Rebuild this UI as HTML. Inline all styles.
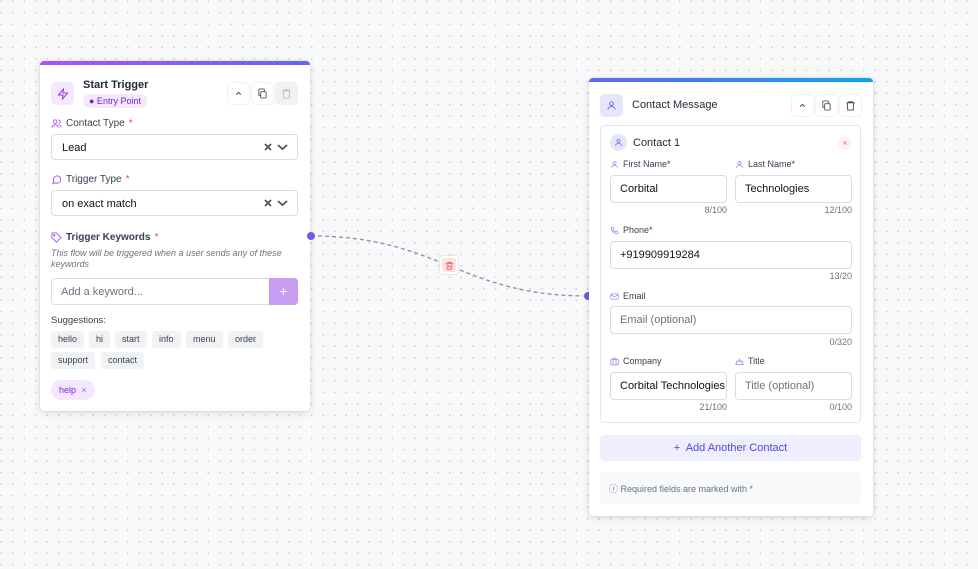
<!DOCTYPE html>
<html><head><meta charset="utf-8"><style>
*{box-sizing:border-box;margin:0;padding:0}
body{width:978px;height:569px;overflow:hidden;font-family:"Liberation Sans",sans-serif;background-color:#f8f9fb;background-image:radial-gradient(circle,#cfd0da 0.8px,transparent 1.1px);background-size:11.5px 11.5px;background-position:-4.5px -4.5px;position:relative;color:#1f2937}
.card{position:absolute;background:#fff;border-radius:4px;box-shadow:0 2px 8px rgba(0,0,0,.12),0 0 0 1px rgba(0,0,0,.04);overflow:hidden}
.bar{position:absolute;left:0;right:0;top:0;height:4px}
.a{position:absolute}
.lbl{position:absolute;font-size:10px;color:#374151;display:flex;align-items:center;gap:4px}
.req{color:#ef4444}
.sel{position:absolute;left:11px;width:247px;height:26px;border:1px solid #d9dce1;border-radius:4px;font-size:11px;padding:7px 10px;color:#111}
.chip{position:absolute;height:17px;background:#f1f2f4;border-radius:3px;font-size:9px;line-height:17px;padding:0 7px;color:#374151}
.btn{position:absolute;width:21px;height:21px;border-radius:4px;box-shadow:0 0 0 1px #eef0f3;display:flex;align-items:center;justify-content:center}
.inp{position:absolute;height:28px;border:1px solid #d9dce1;border-radius:4px;font-size:11px;padding:7px 9px;color:#111}
.ph{color:#6b7280}
.cnt{position:absolute;font-size:9px;color:#6b7280;text-align:right}
svg{display:block}
.si{position:absolute;right:7px;top:7px}
</style></head><body>
<svg class="a" style="left:0;top:0" width="978" height="569">
<path d="M311 236 C 440 236, 460 296, 588 296" fill="none" stroke="#8a8f99" stroke-width="1.3" stroke-dasharray="4 3"/>
</svg>

<div class="card" style="left:40px;top:61px;width:270px;height:350px">
<div class="bar" style="background:linear-gradient(90deg,#a855f7,#6366f1)"></div>
<div class="a" style="left:11px;top:21px;width:23px;height:23px;border-radius:5px;background:#f3e8ff;display:flex;align-items:center;justify-content:center"><svg width="12" height="12" viewBox="0 0 24 24" fill="none" stroke="#9333ea" stroke-width="2"><path d="M13 2L3 14h9l-1 8 10-12h-9l1-8z"/></svg></div>
<div class="a" style="left:43px;top:18px;font-size:11px;font-weight:bold;color:#1f2937">Start Trigger</div>
<div class="a" style="left:43px;top:33px;height:14px;padding:0 6px;background:#f3e8ff;border-radius:7px;font-size:9px;line-height:14px;color:#7e22ce">● Entry Point</div>
<div class="btn" style="left:188px;top:22px"><svg width="9" height="9" viewBox="0 0 24 24" fill="none" stroke="#444" stroke-width="2.5"><path d="M6 15l6-6 6 6"/></svg></div>
<div class="btn" style="left:212px;top:22px"><svg width="11" height="11" viewBox="0 0 24 24" fill="none" stroke="#555" stroke-width="2"><rect x="8" y="8" width="12" height="14" rx="2"/><path d="M16 8V4a2 2 0 0 0-2-2H6a2 2 0 0 0-2 2v12h4"/></svg></div>
<div class="btn" style="left:236px;top:22px;background:#f1f2f4"><svg width="11" height="11" viewBox="0 0 24 24" fill="none" stroke="#bbb" stroke-width="2"><path d="M3 6h18M8 6V4h8v2M5 6l1 16h12l1-16"/></svg></div>
<div class="lbl" style="left:11px;top:57px"><svg width="11" height="11" viewBox="0 0 24 24" fill="none" stroke="#a855f7" stroke-width="2"><circle cx="9" cy="8" r="4"/><path d="M2 21c0-4 3-6 7-6s7 2 7 6M16 4a4 4 0 0 1 0 8M22 21c0-3-2-5-4-6"/></svg>Contact Type <span class="req">*</span></div>
<div class="sel" style="top:73px">Lead<svg class="si" width="26" height="10" viewBox="0 0 26 10" fill="none" stroke="#555" stroke-width="1.8"><path d="M1 2l6 6M7 2l-6 6M14 3l4.5 4 4.5-4"/></svg></div>
<div class="lbl" style="left:11px;top:113px"><svg width="11" height="11" viewBox="0 0 24 24" fill="none" stroke="#a855f7" stroke-width="2"><path d="M21 12a8 8 0 0 1-12 7l-5 2 2-5A8 8 0 1 1 21 12z"/></svg>Trigger Type <span class="req">*</span></div>
<div class="sel" style="top:129px">on exact match<svg class="si" width="26" height="10" viewBox="0 0 26 10" fill="none" stroke="#555" stroke-width="1.8"><path d="M1 2l6 6M7 2l-6 6M14 3l4.5 4 4.5-4"/></svg></div>
<div class="lbl" style="left:11px;top:171px"><svg width="11" height="11" viewBox="0 0 24 24" fill="none" stroke="#a855f7" stroke-width="2"><path d="M2 2h10l10 10-10 10L2 12z"/><circle cx="7" cy="7" r="1.5"/></svg><b>Trigger Keywords</b> <span class="req">*</span></div>
<div class="a" style="left:11px;top:187px;font-size:9px;font-style:italic;color:#6b7280;line-height:11px;width:250px">This flow will be triggered when a user sends any of these keywords</div>
<div class="a" style="left:11px;top:217px;width:247px;height:27px;border:1px solid #d9dce1;border-radius:4px;font-size:11px;padding:7px 9px;color:#6b7280">Add a keyword...</div>
<div class="a" style="left:229px;top:217px;width:29px;height:27px;background:#c89cf0;border-radius:0 4px 4px 0;color:#fff;text-align:center;font-size:14px;line-height:26px">+</div>
<div class="a" style="left:11px;top:254px;font-size:9.5px;color:#374151">Suggestions:</div>
<div class="chip" style="left:11px;top:270px">hello</div>
<div class="chip" style="left:49px;top:270px">hi</div>
<div class="chip" style="left:75px;top:270px">start</div>
<div class="chip" style="left:112px;top:270px">info</div>
<div class="chip" style="left:146px;top:270px">menu</div>
<div class="chip" style="left:188px;top:270px">order</div>
<div class="chip" style="left:11px;top:291px">support</div>
<div class="chip" style="left:61px;top:291px">contact</div>
<div class="a" style="left:11px;top:319px;height:20px;padding:0 8px;background:#f3e8ff;border-radius:10px;font-size:9px;line-height:20px;color:#7e22ce">help <span style="color:#a855f7;margin-left:3px">×</span></div>
</div>

<div class="a" style="left:306px;top:231px;width:10px;height:10px;border-radius:50%;background:#6d5ce7;border:1px solid #fff"></div>
<div class="a" style="left:583px;top:291px;width:10px;height:10px;border-radius:50%;background:#6d5ce7;border:1px solid #fff"></div>
<div class="a" style="left:440px;top:256px;width:18px;height:18px;border-radius:3px;background:#fff;box-shadow:0 0 0 1px #e5e7eb;display:flex;align-items:center;justify-content:center"><div style="width:14px;height:14px;background:#fde2e2;border-radius:2px;display:flex;align-items:center;justify-content:center"><svg width="9" height="9" viewBox="0 0 24 24" fill="none" stroke="#ef4444" stroke-width="2"><path d="M3 6h18M8 6V4h8v2M5 6l1 16h12l1-16M10 11v7M14 11v7"/></svg></div></div>

<div class="card" style="left:589px;top:78px;width:284px;height:438px">
<div class="bar" style="background:linear-gradient(90deg,#6366f1,#0ea5e9)"></div>
<div class="a" style="left:11px;top:16px;width:23px;height:23px;border-radius:5px;background:#e6e6fb;display:flex;align-items:center;justify-content:center"><svg width="11" height="11" viewBox="0 0 24 24" fill="none" stroke="#6366f1" stroke-width="2"><circle cx="12" cy="8" r="4"/><path d="M4 21c0-4 4-7 8-7s8 3 8 7"/></svg></div>
<div class="a" style="left:43px;top:21px;font-size:11px;color:#1f2937">Contact Message</div>
<div class="btn" style="left:203px;top:17px"><svg width="9" height="9" viewBox="0 0 24 24" fill="none" stroke="#444" stroke-width="2.5"><path d="M6 15l6-6 6 6"/></svg></div>
<div class="btn" style="left:227px;top:17px"><svg width="11" height="11" viewBox="0 0 24 24" fill="none" stroke="#555" stroke-width="2"><rect x="8" y="8" width="12" height="14" rx="2"/><path d="M16 8V4a2 2 0 0 0-2-2H6a2 2 0 0 0-2 2v12h4"/></svg></div>
<div class="btn" style="left:251px;top:17px"><svg width="11" height="11" viewBox="0 0 24 24" fill="none" stroke="#444" stroke-width="2"><path d="M3 6h18M8 6V4h8v2M5 6l1 16h12l1-16"/></svg></div>
<div class="a" style="left:11px;top:47px;width:261px;height:298px;border:1px solid #e5e7eb;border-radius:4px"></div>
<div class="a" style="left:21px;top:56px;width:17px;height:17px;border-radius:50%;background:#e6e6fb;display:flex;align-items:center;justify-content:center"><svg width="9" height="9" viewBox="0 0 24 24" fill="none" stroke="#6366f1" stroke-width="2"><circle cx="12" cy="8" r="4"/><path d="M4 21c0-4 4-7 8-7s8 3 8 7"/></svg></div>
<div class="a" style="left:44px;top:59px;font-size:11px;color:#1f2937">Contact 1</div>
<div class="a" style="left:249px;top:58px;width:14px;height:14px;border-radius:50%;background:#fdf2f2;color:#f87171;font-size:9px;text-align:center;line-height:14px">×</div>
<div class="lbl" style="left:21px;top:81px;font-size:9px"><svg width="9" height="9" viewBox="0 0 24 24" fill="none" stroke="#8b8df0" stroke-width="2"><circle cx="12" cy="8" r="4"/><path d="M4 21c0-4 4-7 8-7s8 3 8 7"/></svg>First Name*</div>
<div class="lbl" style="left:146px;top:81px;font-size:9px"><svg width="9" height="9" viewBox="0 0 24 24" fill="none" stroke="#8b8df0" stroke-width="2"><circle cx="12" cy="8" r="4"/><path d="M4 21c0-4 4-7 8-7s8 3 8 7"/></svg>Last Name*</div>
<div class="inp" style="left:21px;top:97px;width:117px">Corbital</div>
<div class="inp" style="left:146px;top:97px;width:117px">Technologies</div>
<div class="cnt" style="left:21px;top:127px;width:117px">8/100</div>
<div class="cnt" style="left:146px;top:127px;width:117px">12/100</div>
<div class="lbl" style="left:21px;top:147px;font-size:9px"><svg width="9" height="9" viewBox="0 0 24 24" fill="none" stroke="#8b8df0" stroke-width="2"><path d="M5 3h4l2 5-3 2a11 11 0 0 0 6 6l2-3 5 2v4a2 2 0 0 1-2 2A17 17 0 0 1 3 5a2 2 0 0 1 2-2z"/></svg>Phone*</div>
<div class="inp" style="left:21px;top:163px;width:242px">+919909919284</div>
<div class="cnt" style="left:21px;top:193px;width:242px">13/20</div>
<div class="lbl" style="left:21px;top:213px;font-size:9px"><svg width="9" height="9" viewBox="0 0 24 24" fill="none" stroke="#8b8df0" stroke-width="2"><rect x="2" y="5" width="20" height="14" rx="2"/><path d="M2 7l10 6 10-6"/></svg>Email</div>
<div class="inp ph" style="left:21px;top:228px;width:242px">Email (optional)</div>
<div class="cnt" style="left:21px;top:259px;width:242px">0/320</div>
<div class="lbl" style="left:21px;top:278px;font-size:9px"><svg width="9" height="9" viewBox="0 0 24 24" fill="none" stroke="#8b8df0" stroke-width="2"><rect x="2" y="7" width="20" height="14" rx="1"/><path d="M8 7V3h8v4M8 7v14M16 7v14"/></svg>Company</div>
<div class="lbl" style="left:146px;top:278px;font-size:9px"><svg width="9" height="9" viewBox="0 0 24 24" fill="none" stroke="#8b8df0" stroke-width="2"><path d="M2 20h20l-3-10-5 4-2-8-4 7-3-2z"/></svg>Title</div>
<div class="inp" style="left:21px;top:294px;width:117px;white-space:nowrap;overflow:hidden;padding-right:2px">Corbital Technologies</div>
<div class="inp ph" style="left:146px;top:294px;width:117px">Title (optional)</div>
<div class="cnt" style="left:21px;top:324px;width:117px">21/100</div>
<div class="cnt" style="left:146px;top:324px;width:117px">0/100</div>
<div class="a" style="left:11px;top:357px;width:261px;height:26px;background:#eeeefc;border-radius:4px;color:#4f46e5;font-size:11px;text-align:center;line-height:26px">+&nbsp; Add Another Contact</div>
<div class="a" style="left:11px;top:394px;width:261px;height:32px;background:#f8f9fb;border-radius:4px;font-size:9px;color:#6b7280;padding:10px 9px">ⓘ Required fields are marked with *</div>
</div>
</body></html>
